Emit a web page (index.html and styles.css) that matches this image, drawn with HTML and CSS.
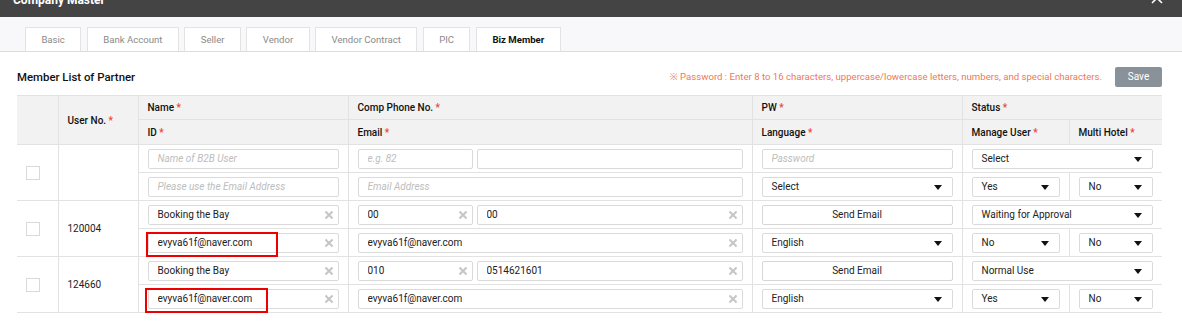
FILE: index.html
```html
<!DOCTYPE html>
<html lang="en">
<head>
  <meta charset="UTF-8">
  <title>Company Master</title>
  <link rel="stylesheet" href="styles.css">
</head>
<body>
  <header class="modal-head">
    <h1>Company Master</h1>
    <svg class="close" width="12" height="12" viewBox="0 0 12 12"><path d="M1 1L11 11M11 1L1 11" stroke="#fff" stroke-width="1.6"/></svg>
  </header>

  <nav class="tabs">
    <a class="tab">Basic</a>
    <a class="tab">Bank Account</a>
    <a class="tab">Seller</a>
    <a class="tab">Vendor</a>
    <a class="tab">Vendor Contract</a>
    <a class="tab">PIC</a>
    <a class="tab active">Biz Member</a>
  </nav>

  <main class="content">
    <div class="toolbar">
      <h2>Member List of Partner</h2>
      <div class="actions">
        <span class="note">※ Password : Enter 8 to 16 characters, uppercase/lowercase letters, numbers, and special characters.</span>
        <button class="btn-save">Save</button>
      </div>
    </div>

    <table class="grid">
      <colgroup>
        <col style="width:41px">
        <col style="width:80px">
        <col style="width:210px">
        <col style="width:404px">
        <col style="width:210px">
        <col style="width:107px">
        <col style="width:93px">
      </colgroup>
      <thead>
        <tr class="h1">
          <th rowspan="2"></th>
          <th rowspan="2">User No. <i>*</i></th>
          <th>Name <i>*</i></th>
          <th>Comp Phone No. <i>*</i></th>
          <th>PW <i>*</i></th>
          <th colspan="2">Status <i>*</i></th>
        </tr>
        <tr class="h2">
          <th>ID <i>*</i></th>
          <th>Email <i>*</i></th>
          <th>Language <i>*</i></th>
          <th>Manage User <i>*</i></th>
          <th>Multi Hotel <i>*</i></th>
        </tr>
      </thead>
      <tbody>
        <!-- new member -->
        <tr>
          <td rowspan="2"><input type="checkbox" class="chk"></td>
          <td rowspan="2"></td>
          <td><input class="inp" placeholder="Name of B2B User"></td>
          <td><div class="pair"><input class="inp code" placeholder="e.g. 82"><input class="inp" placeholder=""></div></td>
          <td><input class="inp" placeholder="Password"></td>
          <td colspan="2"><span class="sel">Select</span></td>
        </tr>
        <tr>
          <td><input class="inp" placeholder="Please use the Email Address"></td>
          <td><input class="inp" placeholder="Email Address"></td>
          <td><span class="sel">Select</span></td>
          <td><span class="sel">Yes</span></td>
          <td><span class="sel">No</span></td>
        </tr>

        <tr>
          <td rowspan="2"><input type="checkbox" class="chk"></td>
          <td rowspan="2">120004</td>
          <td><div class="field"><input class="inp" value="Booking the Bay"><span class="clear"></span></div></td>
          <td>
            <div class="pair">
              <div class="field code"><input class="inp" value="00"><span class="clear"></span></div>
              <div class="field"><input class="inp" value="00"><span class="clear"></span></div>
            </div>
          </td>
          <td><button class="btn-line">Send Email</button></td>
          <td colspan="2"><span class="sel">Waiting for Approval</span></td>
        </tr>
        <tr>
          <td><div class="field"><input class="inp" value="evyva61f@naver.com"><span class="clear"></span><span class="mark mark-a"></span></div></td>
          <td><div class="field"><input class="inp" value="evyva61f@naver.com"><span class="clear"></span></div></td>
          <td><span class="sel">English</span></td>
          <td><span class="sel">No</span></td>
          <td><span class="sel">No</span></td>
        </tr>

        <tr>
          <td rowspan="2"><input type="checkbox" class="chk"></td>
          <td rowspan="2">124660</td>
          <td><div class="field"><input class="inp" value="Booking the Bay"><span class="clear"></span></div></td>
          <td>
            <div class="pair">
              <div class="field code"><input class="inp" value="010"><span class="clear"></span></div>
              <div class="field"><input class="inp" value="0514621601"><span class="clear"></span></div>
            </div>
          </td>
          <td><button class="btn-line">Send Email</button></td>
          <td colspan="2"><span class="sel">Normal Use</span></td>
        </tr>
        <tr>
          <td><div class="field"><input class="inp" value="evyva61f@naver.com"><span class="clear"></span><span class="mark mark-b"></span></div></td>
          <td><div class="field"><input class="inp" value="evyva61f@naver.com"><span class="clear"></span></div></td>
          <td><span class="sel">English</span></td>
          <td><span class="sel">Yes</span></td>
          <td><span class="sel">No</span></td>
        </tr>
      </tbody>
    </table>
  </main>
</body>
</html>
```

FILE: styles.css
```css
:root {
  --head: #444444;
  --line: #e2e2e2;
  --th-bg: #f2f2f2;
  --text: #222222;
  --muted: #bdbdbd;
  --req: #e8453c;
}

* {
  margin: 0;
  padding: 0;
  box-sizing: border-box;
}

body {
  font-family: Roboto, "Noto Sans", sans-serif;
  font-size: 10px;
  color: var(--text);
  background: #fff;
  width: 1182px;
  height: 328px;
  overflow: hidden;
}

.modal-head {
  height: 17px;
  background: var(--head);
  display: flex;
  justify-content: space-between;
  align-items: flex-end;
  padding: 0 19px 10px 13px;
  overflow: hidden;
}

.modal-head h1 {
  color: #fff;
  font-size: 12px;
  font-weight: 700;
  line-height: 14px;
}

.modal-head .close {
  margin-bottom: 3px;
}

.tabs {
  background: #f8f7fa;
  border-bottom: 1px solid #dcdcdc;
  height: 35px;
  padding: 10px 0 0 25px;
  display: flex;
  gap: 5.5px;
}

.tab {
  background: #fff;
  border: 1px solid #e3e3e3;
  border-bottom: none;
  padding: 0 15.4px;
  height: 24px;
  line-height: 23px;
  text-align: center;
  color: #8a8a8a;
  font-size: 9.6px;
}

.tab.active {
  color: #111;
  font-weight: 700;
}

.content {
  padding: 15px 20px 0 17px;
}

.toolbar {
  display: flex;
  justify-content: space-between;
  align-items: center;
  height: 19px;
  margin-bottom: 9px;
}

.toolbar h2 {
  font-size: 11.4px;
  font-weight: 500;
  color: #111;
}

.actions {
  display: flex;
  align-items: center;
  gap: 13px;
}

.note {
  color: #f0785a;
  font-size: 9.6px;
}

.btn-save {
  width: 47px;
  height: 20px;
  border: none;
  border-radius: 2px;
  background: #8a9299;
  color: #fff;
  font-family: inherit;
  font-size: 10px;
}

.grid {
  width: 1145px;
  table-layout: fixed;
  border-collapse: collapse;
  border-top: 1px solid #8c8c8c;
  border-bottom: 1px solid #9a9a9a;
  border-left: hidden;
  border-right: hidden;
}

.grid th,
.grid td {
  border: 1px solid var(--line);
  padding: 0 9px;
  text-align: left;
  vertical-align: middle;
}

.grid th {
  background: var(--th-bg);
  font-weight: 500;
  color: #111;
}

.grid .h1 th { height: 24px; }
.grid .h2 th { height: 25px; }
.grid td { height: 28px; }

.grid i {
  color: var(--req);
  font-style: normal;
}

.chk {
  appearance: none;
  display: block;
  width: 14px;
  height: 14px;
  border: 1px solid #d9d9d9;
  background: #fff;
}

.inp {
  width: 100%;
  height: 20px;
  border: 1px solid #dadada;
  border-radius: 2px;
  padding: 0 20px 0 9px;
  font-family: inherit;
  font-size: 10px;
  color: var(--text);
  background: #fff;
  outline: none;
  display: block;
}

.inp::placeholder {
  color: var(--muted);
  font-style: italic;
}

.pair {
  display: flex;
  gap: 4px;
}

.pair .code { width: 115px; flex: none; }
.pair > :last-child { flex: 1; }

.field {
  position: relative;
}

.clear {
  position: absolute;
  right: 6px;
  top: 6px;
  width: 8px;
  height: 8px;
}

.clear::before,
.clear::after {
  content: "";
  position: absolute;
  left: 3px;
  top: -1px;
  width: 2px;
  height: 10px;
  background: #c6c6c6;
  transform: rotate(45deg);
}

.clear::after {
  transform: rotate(-45deg);
}

.mark {
  position: absolute;
  top: -1px;
  height: 25px;
  border: 2px solid #ee0000;
}

.mark-a { left: -2px; width: 132px; }
.mark-b { left: -3px; width: 123px; }

.sel {
  position: relative;
  display: block;
  height: 20px;
  line-height: 18px;
  border: 1px solid #dadada;
  border-radius: 2px;
  padding: 0 24px 0 9px;
  background: #fff;
  color: var(--text);
}

.sel::after {
  content: "";
  position: absolute;
  right: 10px;
  top: 7px;
  border-left: 4px solid transparent;
  border-right: 4px solid transparent;
  border-top: 5px solid #111;
}

.btn-line {
  display: block;
  width: 100%;
  height: 20px;
  border: 1px solid #d6d6d6;
  border-radius: 2px;
  background: #fff;
  font-family: inherit;
  font-size: 10px;
  color: var(--text);
}
```
